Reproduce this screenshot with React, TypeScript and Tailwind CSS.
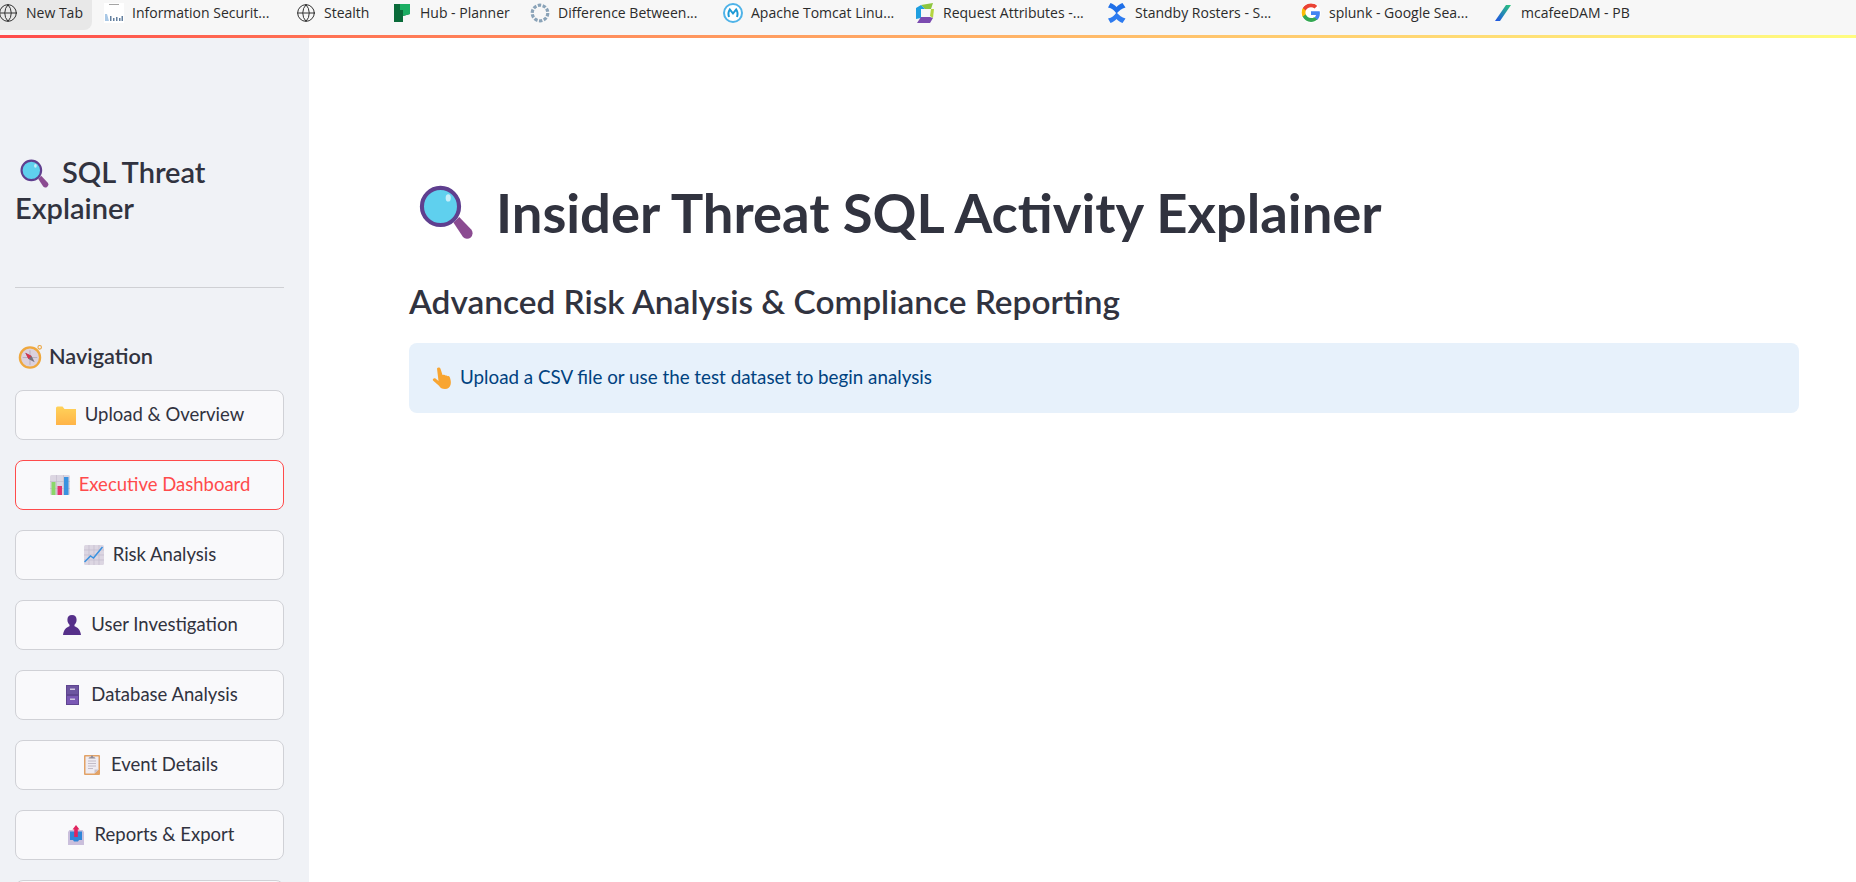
import type { ReactNode } from 'react'
import { Globe } from 'lucide-react'

function MagnifierIcon({ className }: { className: string }) {
  return (
    <svg viewBox="0 0 32 32" className={className} aria-hidden>
      <path d="M20 21.800l3.400-3.200 7 7.300a3.300 3.300 0 0 1-.3 4.600 3.300 3.300 0 0 1-4.500-.2z" fill="#8b4b91" />
      <circle cx="12.500" cy="12.500" r="10.800" fill="#5fd0ee" stroke="#5f3f8f" strokeWidth="2.400" />
      <ellipse cx="17" cy="7.500" rx="1.500" ry="2.100" fill="#c7eef9" />
    </svg>
  )
}

function CompassIcon() {
  return (
    <svg viewBox="0 0 24 24" className="size-[25px]" aria-hidden>
      <circle cx="20.800" cy="3.200" r="1.700" fill="none" stroke="#eaa23c" strokeWidth="1" />
      <circle cx="11.500" cy="13" r="9.700" fill="#dbd1de" stroke="#efa83e" strokeWidth="2.200" />
      <path d="M11.500 6v14M4.500 13h14" stroke="#a49daa" strokeWidth=".6" />
      <path d="M7 8.500l6 3 3 6-6-3z" fill="#75707c" />
      <path d="M7 8.500l6 3-3 3z" fill="#d8324e" />
    </svg>
  )
}

function FolderIcon() {
  return (
    <svg viewBox="0 0 20 19" className="h-[19px] w-5" aria-hidden>
      <defs>
        <linearGradient id="fold" x1="0" y1="0" x2="0" y2="1">
          <stop offset="0" stopColor="#ffd25a" />
          <stop offset="1" stopColor="#ffb347" />
        </linearGradient>
      </defs>
      <path d="M0 2a1.500 1.500 0 0 1 1.500-1.500h5l2 2.500H20v15.500a.8.800 0 0 1-.8.800H.8a.8.800 0 0 1-.8-.8z" fill="url(#fold)" />
    </svg>
  )
}

function BarsIcon() {
  return (
    <svg viewBox="0 0 20 20" className="size-5" aria-hidden>
      <rect width="20" height="20" rx="1.500" fill="#dcd6e2" />
      <path d="M6.500 0v20M13.500 0v20M0 6.500h20M0 13.500h20" stroke="#c3bbcd" strokeWidth=".7" />
      <rect x="1.500" y="7" width="4" height="13" fill="#8bd66a" />
      <rect x="7.500" y="11" width="4.500" height="9" fill="#e6326e" />
      <rect x="14" y="2" width="4.500" height="18" fill="#3a92e0" />
    </svg>
  )
}

function LineChartIcon() {
  return (
    <svg viewBox="0 0 20 20" className="size-5" aria-hidden>
      <rect width="20" height="20" rx="1.500" fill="#dcd6e2" />
      <path d="M5 0v20M10 0v20M15 0v20M0 5h20M0 10h20M0 15h20" stroke="#c3bbcd" strokeWidth=".7" />
      <path d="M0.500 17l6-6 3 2 9-11" fill="none" stroke="#3a92e0" strokeWidth="1.500" />
    </svg>
  )
}

function BustIcon() {
  return (
    <svg viewBox="0 0 18 20" className="h-5 w-[18px]" aria-hidden>
      <path d="M9 0c3 0 4.600 2 4.600 4.800 0 2.300-1 4.200-2.300 5.200l.5 1.500c2.800.8 5.400 3 6.200 8.500H0c.8-5.500 3.400-7.700 6.200-8.500l.5-1.500C5.400 9 4.400 7.100 4.400 4.800 4.400 2 6 0 9 0z" fill="#56308a" />
    </svg>
  )
}

function CabinetIcon() {
  return (
    <svg viewBox="0 0 13 20" className="h-5 w-[13px]" aria-hidden>
      <rect width="13" height="20" fill="#5f4590" />
      <rect x="1" y="1" width="11" height="8" fill="#6d55a0" />
      <rect x="1" y="11" width="11" height="8" fill="#7a58b5" />
      <rect x="4" y="3.500" width="5" height="1.500" fill="#cfc6e0" />
      <rect x="4" y="13.500" width="5" height="1.500" fill="#cfc6e0" />
    </svg>
  )
}

function ClipboardIcon() {
  return (
    <svg viewBox="0 0 16 20" className="h-5 w-4" aria-hidden>
      <rect width="16" height="20" rx="1" fill="#e2a266" />
      <path d="M1.500 1.500h13v13l-4 4h-9z" fill="#efecf2" />
      <path d="M10.500 18.500v-4h4z" fill="#c9c3cf" />
      <path d="M4 6h8M4 8.500h8M4 11h8M4 13.500h5" stroke="#b7b0bd" strokeWidth=".8" />
      <path d="M4.500 3.500c0-1 1-1.200 2-1.300L8 0l1.500 2.200c1 .1 2 .3 2 1.300z" fill="#8f8a96" />
    </svg>
  )
}

function OutboxIcon() {
  return (
    <svg viewBox="0 0 16 20" className="h-5 w-4" aria-hidden>
      <path d="M1.500 5H14.500L16 7v13H0V7z" fill="#cabfdc" />
      <path d="M2 6.500h12V15h-3l-1 1.500H6L5 15H2z" fill="#2f86d8" />
      <path d="M8 0l3.500 4.500H9.800V12H6.200V4.500H4.500z" fill="#e0245e" />
    </svg>
  )
}

function HandIcon() {
  return (
    <svg viewBox="0 0 20 22" className="h-[22px] w-5" aria-hidden>
      <path d="M5 1.500c.6-1.500 3-1.400 3.500.2L10.500 8l1-.2c1-.2 1.600.2 2 .8.800-.4 1.700-.2 2.100.6.900-.3 1.800.1 2.200 1 .8 2 1.400 5 .9 7-.6 2.700-2.600 4.800-5.700 4.800-3 0-4.600-1-6-3.200L1 13.500c-.8-1.300 1-3 2.500-2l3 2.500z" fill="#f8a531" />
    </svg>
  )
}

const globe = <Globe className="size-5 text-[#333333]" strokeWidth={1.200} />

const TABS: { label: string; icon: ReactNode; width: string }[] = [
  { label: 'New Tab', icon: globe, width: 'mr-3 w-[92px] rounded-br-lg bg-[#e8e8e8]' },
  {
    label: 'Information Securit...',
    icon: (
      <svg viewBox="0 0 20 20" className="size-5" aria-hidden>
        <rect width="20" height="20" fill="#ffffff" />
        <rect x="5" y="1" width="10" height="1" fill="#a5a5a5" />
        <path d="M1 11h2l2 7H1z" fill="#a9c8e6" />
        <path d="M6 13h1.500v5H6zM9 15h1.500v3H9zM12 14h1.500v4H12zM15 15h1.500v3H15zM17.500 13H19v5h-1.500z" fill="#64809f" />
      </svg>
    ),
    width: 'w-[192px]',
  },
  { label: 'Stealth', icon: globe, width: 'w-[96px]' },
  {
    label: 'Hub - Planner',
    icon: (
      <svg viewBox="0 0 16 18" className="h-[18px] w-4" aria-hidden>
        <path d="M0 0h16v10l-7 2v6H0z" fill="#0a6b3a" />
        <path d="M6 0h10v10l-7 2V6H6z" fill="#1cae63" />
      </svg>
    ),
    width: 'w-[138px]',
  },
  {
    label: 'Difference Between...',
    icon: (
      <svg viewBox="0 0 20 20" className="size-5" aria-hidden>
        <circle cx="10" cy="10" r="7.800" fill="none" stroke="#8aa3b8" strokeWidth="3.200" strokeDasharray="3.400 1.500" />
      </svg>
    ),
    width: 'w-[193px]',
  },
  {
    label: 'Apache Tomcat Linu...',
    icon: (
      <svg viewBox="0 0 20 20" className="size-5" aria-hidden>
        <circle cx="10" cy="10" r="9" fill="#ffffff" stroke="#4fb3e8" strokeWidth="2" />
        <path d="M6 14c-1-3-.6-5.500.8-7.500L10 10.500l3.200-4c1.400 2 1.800 4.500.8 7.500" fill="none" stroke="#1d9ad6" strokeWidth="2" />
      </svg>
    ),
    width: 'w-[192px]',
  },
  {
    label: 'Request Attributes -...',
    icon: (
      <svg viewBox="0 0 18 20" className="h-5 w-[18px]" aria-hidden>
        <path d="M5 2l12-2-2 6H9z" fill="#8ec63f" />
        <path d="M15 6h3l-1 9-3-2z" fill="#b5d53f" />
        <path d="M0 5l5-3 4 4H5v9l-5 1z" fill="#1f9fe0" />
        <path d="M5 14h9l3 1-3 5H1z" fill="#7b4bb0" />
      </svg>
    ),
    width: 'w-[192px]',
  },
  {
    label: 'Standby Rosters - S...',
    icon: (
      <svg viewBox="0 0 20 20" className="size-5" aria-hidden>
        <path d="M1 15.500C5 15 7 12.500 9.500 9.500c3 3 5 5 9 6l-3 4.500c-2.500-.8-4.500-2.500-6-4-1.500 1.500-3.500 3.200-6 4z" fill="#2d7bf0" />
        <path d="M1 4.500C5 5 7 7.500 9.500 10.500c3-3 5-5 9-6l-3-4.500c-2.500.8-4.500 2.500-6 4-1.500-1.500-3.500-3.200-6-4z" fill="#1f6fe8" />
      </svg>
    ),
    width: 'w-[194px]',
  },
  {
    label: 'splunk - Google Sea...',
    icon: (
      <svg viewBox="0 0 18 18" className="size-5 rounded-full bg-white" aria-hidden>
        <path d="M17 9.200c0-.6-.1-1.200-.2-1.700H9v3.300h4.500c-.2 1-.8 1.900-1.700 2.500v2.100h2.700c1.600-1.500 2.500-3.600 2.500-6.200z" fill="#4285f4" />
        <path d="M9 17c2.300 0 4.200-.8 5.500-2.100l-2.700-2.100c-.7.500-1.700.8-2.800.8-2.200 0-4-1.500-4.700-3.400H1.500v2.200C2.900 15.200 5.700 17 9 17z" fill="#34a853" />
        <path d="M4.300 10.200c-.2-.5-.3-1.100-.3-1.700s.1-1.200.3-1.700V4.600H1.500C.9 5.700.6 7 .6 8.500s.3 2.800.9 3.900z" fill="#fbbc05" />
        <path d="M9 3.800c1.200 0 2.300.4 3.200 1.200l2.400-2.400C13.200 1.300 11.300.5 9 .5 5.700.5 2.900 2.300 1.500 4.600l2.800 2.200C5 5 6.800 3.800 9 3.800z" fill="#ea4335" />
      </svg>
    ),
    width: 'w-[192px]',
  },
  {
    label: 'mcafeeDAM - PB',
    icon: (
      <svg viewBox="0 0 16 16" className="size-4" aria-hidden>
        <defs>
          <linearGradient id="slash" x1="1" y1="0" x2="0" y2="1">
            <stop offset="0" stopColor="#2bc77a" />
            <stop offset="1" stopColor="#1f4fe8" />
          </linearGradient>
        </defs>
        <path d="M11 0h5L5 16H0z" fill="url(#slash)" />
      </svg>
    ),
    width: 'w-[140px]',
  },
]

const NAV: { label: string; icon: ReactNode; active?: boolean }[] = [
  { label: 'Upload & Overview', icon: <FolderIcon /> },
  { label: 'Executive Dashboard', icon: <BarsIcon />, active: true },
  { label: 'Risk Analysis', icon: <LineChartIcon /> },
  { label: 'User Investigation', icon: <BustIcon /> },
  { label: 'Database Analysis', icon: <CabinetIcon /> },
  { label: 'Event Details', icon: <ClipboardIcon /> },
  { label: 'Reports & Export', icon: <OutboxIcon /> },
]

export default function App() {
  return (
    <div className="flex h-[882px] w-full flex-col overflow-hidden bg-white font-['Lato','Noto_Sans',sans-serif] text-[#31333f]">
      <div className="flex h-[35px] shrink-0 items-start bg-[#f7f7f7] font-['Open_Sans',sans-serif] text-[14px] text-[#2b2b2b]">
        {TABS.map((tab, i) => (
          <div key={tab.label} className={`flex h-[30px] shrink-0 items-center gap-2 pb-[5px] ${tab.width}`}>
            <span className={`flex w-5 shrink-0 justify-center ${i === 0 ? '-ml-0.5' : ''}`}>{tab.icon}</span>
            <span className="whitespace-nowrap">{tab.label}</span>
          </div>
        ))}
      </div>
      <div className="h-[3px] shrink-0 bg-gradient-to-r from-[#ff4b4b] to-[#fffd80]" />
      <div className="flex min-h-0 flex-1">
        <aside className="flex w-[309px] shrink-0 flex-col overflow-hidden bg-[#f0f2f6] pt-[116px] pr-[25px] pl-[15px]">
          <h2 className="text-[29px] leading-[36px] font-semibold">
            <MagnifierIcon className="mr-[13px] ml-[5px] inline-block size-[29px] align-[-5px]" />
            SQL Threat
            <br />
            Explainer
          </h2>
          <div className="mt-[61px] h-px w-full shrink-0 bg-[#cfd0d4]" />
          <div className="mt-[52px] flex h-[32px] items-center gap-[6px] pl-[3px] text-[21.7px] font-semibold">
            <CompassIcon />
            Navigation
          </div>
          <nav className="mt-[18px] flex flex-col gap-5">
            {NAV.map((item) => (
              <button
                key={item.label}
                className={`flex h-[50px] shrink-0 items-center justify-center gap-2 rounded-lg border bg-[#f9f9fb] text-[18.5px] ${
                  item.active ? 'border-[#ff4b4b] text-[#ff4b4b]' : 'border-[#d0d1d6]'
                }`}
              >
                <span className="flex w-[22px] shrink-0 justify-center">{item.icon}</span>
                {item.label}
              </button>
            ))}
            <div className="h-[50px] shrink-0 rounded-lg border border-[#d0d1d6] bg-[#f9f9fb]" />
          </nav>
        </aside>
        <main className="min-w-0 flex-1 pt-[140px] pr-[57px] pl-[100px]">
          <h1 className="flex h-[68px] items-center text-[54.4px] leading-none font-bold">
            <MagnifierIcon className="mr-[22px] ml-[10px] size-[55px] shrink-0" />
            Insider Threat SQL Activity Explainer
          </h1>
          <h3 className="mt-[34px] text-[33.4px] leading-[42px] font-semibold">
            Advanced Risk Analysis &amp; Compliance Reporting
          </h3>
          <div className="mt-[21px] flex h-[70px] items-center gap-2 rounded-lg bg-[#e7f1fb] px-[23px] pb-px text-[18.8px] text-[#004280]">
            <HandIcon />
            Upload a CSV file or use the test dataset to begin analysis
          </div>
        </main>
      </div>
    </div>
  )
}
